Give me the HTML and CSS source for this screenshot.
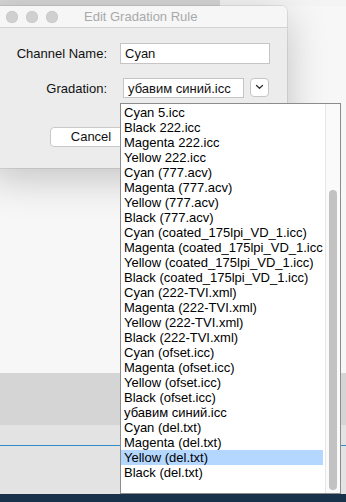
FILE: index.html
```html
<!DOCTYPE html>
<html>
<head>
<meta charset="utf-8">
<link rel="stylesheet" href="styles.css">
</head>
<body>
<div class="desk">
  <div class="bg-strip"></div>
  <div class="bg-white"></div>
  <div class="bg-band1"></div>
  <div class="bg-band2"><div class="blue-line"></div></div>
  <div class="bg-dark"></div>

  <div class="window">
    <div class="titlebar">
      <div class="lights"><span class="light"></span><span class="light"></span><span class="light"></span></div>
      <div class="title">Edit Gradation Rule</div>
    </div>
    <div class="body">
      <div class="row row-name">
        <label class="lbl">Channel Name:</label>
        <div class="field field-name">Cyan</div>
      </div>
      <div class="row row-grad">
        <label class="lbl">Gradation:</label>
        <div class="field field-grad">убавим синий.icc</div>
        <div class="dd-btn"><svg width="9" height="6" viewBox="0 0 9 6"><path d="M1.5 1.5 L4.5 4.3 L7.5 1.5" fill="none" stroke="#333" stroke-width="1.3" stroke-linecap="round" stroke-linejoin="round"/></svg></div>
      </div>
      <div class="buttons">
        <div class="btn">Cancel</div>
      </div>
    </div>
  </div>

  <div class="listbox">
    <div class="items">
      <div class="item">Cyan 5.icc</div>
      <div class="item">Black 222.icc</div>
      <div class="item">Magenta 222.icc</div>
      <div class="item">Yellow 222.icc</div>
      <div class="item">Cyan (777.acv)</div>
      <div class="item">Magenta (777.acv)</div>
      <div class="item">Yellow (777.acv)</div>
      <div class="item">Black (777.acv)</div>
      <div class="item">Cyan (coated_175lpi_VD_1.icc)</div>
      <div class="item">Magenta (coated_175lpi_VD_1.icc)</div>
      <div class="item">Yellow (coated_175lpi_VD_1.icc)</div>
      <div class="item">Black (coated_175lpi_VD_1.icc)</div>
      <div class="item">Cyan (222-TVI.xml)</div>
      <div class="item">Magenta (222-TVI.xml)</div>
      <div class="item">Yellow (222-TVI.xml)</div>
      <div class="item">Black (222-TVI.xml)</div>
      <div class="item">Cyan (ofset.icc)</div>
      <div class="item">Magenta (ofset.icc)</div>
      <div class="item">Yellow (ofset.icc)</div>
      <div class="item">Black (ofset.icc)</div>
      <div class="item">убавим синий.icc</div>
      <div class="item">Cyan (del.txt)</div>
      <div class="item">Magenta (del.txt)</div>
      <div class="item selected">Yellow (del.txt)</div>
      <div class="item">Black (del.txt)</div>
    </div>
    <div class="scrollbar"><div class="thumb"></div></div>
  </div>
</div>
</body>
</html>
```

FILE: styles.css
```css
html, body {
  margin: 0;
  padding: 0;
}
body {
  font-family: "Liberation Sans", Arial, sans-serif;
  font-size: 13px;
  color: #111;
}
.desk {
  position: relative;
  width: 346px;
  height: 502px;
  overflow: hidden;
  background: #f4f4f4;
  display: flex;
  flex-direction: column;
}
.bg-strip {
  width: 220px;
  height: 6px;
  background: #d6d6d6;
  flex: none;
}
.bg-white {
  height: 367px;
  background: #f7f7f7;
  flex: none;
}
.bg-band1 {
  height: 52px;
  background: #d5d5d5;
  flex: none;
}
.bg-band2 {
  height: 69px;
  background: #e3e3e3;
  flex: none;
  padding-top: 20px;
  box-sizing: border-box;
}
.blue-line {
  height: 1px;
  background: #2f8cc8;
}
.bg-dark {
  flex: 1;
  background: #17324a;
}

.window {
  position: absolute;
  left: -10px;
  top: 6px;
  width: 297px;
  height: 162px;
  background: #ececec;
  border-radius: 5px 5px 0 0;
  box-shadow: 0 10px 40px rgba(0,0,0,0.22), 0 0 0 0.5px rgba(0,0,0,0.15);
  display: flex;
  flex-direction: column;
}
.titlebar {
  height: 21px;
  background: #f6f6f6;
  border-bottom: 1px solid #d3d3d3;
  border-radius: 5px 5px 0 0;
  display: flex;
  align-items: center;
  flex: none;
}
.lights {
  display: flex;
  gap: 8px;
  padding-left: 16px;
}
.light {
  width: 12px;
  height: 12px;
  border-radius: 50%;
  background: #d0d0d0;
  box-shadow: inset 0 0 0 0.5px #c4c4c4;
}
.title {
  margin-left: 26px;
  color: #a9a9a9;
  font-size: 13px;
}
.body {
  flex: 1;
  padding-top: 15px;
}
.row {
  display: flex;
  align-items: center;
}
.lbl {
  width: 117px;
  text-align: right;
  flex: none;
}
.row-name .field {
  margin-left: 13px;
  width: 150px;
  height: 21px;
}
.row-grad {
  margin-top: 14px;
}
.row-grad .field {
  margin-left: 16px;
  width: 121px;
  height: 20px;
}
.field {
  background: #fff;
  box-sizing: border-box;
  border: 1px solid #c5c5c5;
  padding-left: 4px;
  display: flex;
  align-items: center;
  font-size: 13px;
}
.dd-btn {
  margin-left: 6px;
  width: 19px;
  height: 19px;
  box-sizing: border-box;
  background: #fff;
  border: 1px solid #c6c6c6;
  border-radius: 4px;
  display: flex;
  align-items: center;
  justify-content: center;
  margin-top: -2px;
}
.buttons {
  padding-left: 60px;
  margin-top: 29px;
}
.btn {
  width: 82px;
  height: 20px;
  box-sizing: border-box;
  background: #fff;
  border: 1px solid #c9c9c9;
  border-radius: 4px;
  text-align: center;
  line-height: 18px;
  font-size: 13px;
}

.listbox {
  position: absolute;
  left: 120px;
  top: 103px;
  width: 221px;
  height: 391px;
  box-sizing: border-box;
  border: 1px solid #8c8c8c;
  background: #fff;
  display: flex;
}
.items {
  flex: 1;
  min-width: 0;
  overflow: hidden;
  padding-top: 1px;
  padding-right: 2px;
}
.item {
  height: 15px;
  line-height: 15px;
  padding-left: 3px;
  white-space: nowrap;
  overflow: hidden;
  font-size: 13px;
  color: #000;
}
.item.selected {
  background: #b3d7ff;
}
.scrollbar {
  width: 15px;
  flex: none;
  background: #fafafa;
  border-left: 1px solid #e6e6e6;
  box-sizing: border-box;
  padding: 86px 3px 3px 3px;
  display: flex;
}
.thumb {
  flex: 1;
  background: #c2c2c2;
  border-radius: 4px;
}
```
